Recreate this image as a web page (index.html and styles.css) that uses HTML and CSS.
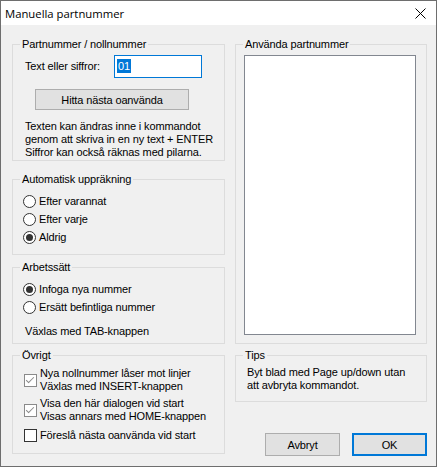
FILE: index.html
```html
<!DOCTYPE html>
<html lang="sv">
<head>
    <meta charset="UTF-8">
    <link rel="stylesheet" href="styles.css">
    <title>Manuella partnummer</title>
</head>
<body>
    <div class="window">
        <div class="titlebar">
            <span class="title">Manuella partnummer</span>
            <svg class="close" width="11" height="11" viewBox="0 0 11 11">
                <path d="M0.5 0.5 L10.5 10.5 M10.5 0.5 L0.5 10.5" stroke="#000" stroke-width="1" fill="none"/>
            </svg>
        </div>

        <div class="content">
            <div class="col-left">
                <div class="group g-part">
                    <div class="group-title">Partnummer / nollnummer</div>
                    <div class="text-row">
                        <span class="field-label">Text eller siffror:</span>
                        <div class="textbox"><span class="sel">01</span></div>
                    </div>
                    <button class="btn btn-find">Hitta nästa oanvända</button>
                    <p class="info">Texten kan ändras inne i kommandot<br>genom att skriva in en ny text + ENTER<br>Siffror kan också räknas med pilarna.</p>
                </div>

                <div class="group g-auto">
                    <div class="group-title">Automatisk uppräkning</div>
                    <div class="options">
                        <label class="radio"><span class="dot"></span>Efter varannat</label>
                        <label class="radio"><span class="dot"></span>Efter varje</label>
                        <label class="radio on"><span class="dot"></span>Aldrig</label>
                    </div>
                </div>

                <div class="group g-mode">
                    <div class="group-title">Arbetssätt</div>
                    <div class="options">
                        <label class="radio on"><span class="dot"></span>Infoga nya nummer</label>
                        <label class="radio"><span class="dot"></span>Ersätt befintliga nummer</label>
                    </div>
                    <p class="hint">Växlas med TAB-knappen</p>
                </div>

                <div class="group g-misc">
                    <div class="group-title">Övrigt</div>
                    <label class="check on first"><span class="box"></span><span>Nya nollnummer låser mot linjer<br>Växlas med INSERT-knappen</span></label>
                    <label class="check on second"><span class="box"></span><span>Visa den här dialogen vid start<br>Visas annars med HOME-knappen</span></label>
                    <label class="check third"><span class="box"></span><span>Föreslå nästa oanvända vid start</span></label>
                </div>
            </div>

            <div class="col-right">
                <div class="group g-used">
                    <div class="group-title">Använda partnummer</div>
                    <div class="listbox"></div>
                </div>

                <div class="group g-tips">
                    <div class="group-title">Tips</div>
                    <p class="tips">Byt blad med Page up/down utan<br>att avbryta kommandot.</p>
                </div>

                <div class="actions">
                    <button class="btn btn-dlg">Avbryt</button>
                    <button class="btn btn-dlg btn-default">OK</button>
                </div>
            </div>
        </div>
    </div>
</body>
</html>
```

FILE: styles.css
```css
        body {
            margin: 0;
            padding: 0;
            font-family: "Liberation Sans", Arial, sans-serif;
            font-size: 11px;
            line-height: 13px;
            letter-spacing: -0.13px;
            color: #000;
        }

        .window {
            width: 437px;
            height: 467px;
            box-sizing: border-box;
            border: 1px solid #6e6e6e;
            display: flex;
            flex-direction: column;
            overflow: hidden;
        }

        .titlebar {
            height: 24px;
            background: #fff;
            display: flex;
            align-items: center;
            justify-content: space-between;
            padding: 0 10px 0 4px;
        }

        .title {
            font-family: "Open Sans", "Noto Sans", sans-serif;
            font-size: 11.3px;
            letter-spacing: 0;
            margin-top: 1px;
        }

        .close {
            display: block;
            margin-top: 1px;
        }

        .content {
            flex: 1;
            background: #f0f0f0;
            display: flex;
            gap: 10px;
            padding: 19px 9px 0 11px;
        }

        .col-left {
            width: 213px;
        }

        .col-right {
            width: 192px;
        }

        .group {
            box-sizing: border-box;
            border: 1px solid #dcdcdc;
        }

        .group-title {
            width: max-content;
            margin: -7px 0 0 7px;
            padding: 0 2px;
            background: #f0f0f0;
        }

        p {
            margin: 0;
        }

        /* left column */
        .g-part { height: 117px; }
        .g-auto { height: 76px; margin-top: 18px; }
        .g-mode { height: 77px; margin-top: 12px; }
        .g-misc { height: 99px; margin-top: 11px; }

        .text-row {
            display: flex;
            align-items: center;
            margin-top: 4px;
            padding-left: 12px;
        }

        .field-label {
            width: 89px;
        }

        .textbox {
            width: 88px;
            height: 23px;
            box-sizing: border-box;
            border: 1px solid #0078d7;
            background: #fff;
            padding: 3px 0 0 2px;
        }

        .sel {
            background: #0078d7;
            color: #fff;
            display: inline-block;
            line-height: 14px;
            padding: 0 1px;
        }

        .btn {
            font-family: inherit;
            font-size: 11px;
            letter-spacing: inherit;
            color: #000;
            background: #e1e1e1;
            border: 1px solid #adadad;
            padding: 0;
            box-sizing: border-box;
        }

        .btn-find {
            display: block;
            width: 154px;
            height: 21px;
            margin: 11px 0 0 22px;
        }

        .info {
            margin: 10px 0 0 12px;
        }

        .options {
            margin-top: 6px;
            padding-left: 10px;
        }

        .radio {
            display: flex;
            align-items: center;
            height: 18px;
        }

        .dot {
            width: 13px;
            height: 13px;
            box-sizing: border-box;
            border: 1px solid #333;
            border-radius: 50%;
            background: #fff;
            margin-right: 3px;
            display: flex;
            align-items: center;
            justify-content: center;
        }

        .radio.on .dot::after {
            content: "";
            width: 7px;
            height: 7px;
            border-radius: 50%;
            background: #333;
        }

        .hint {
            margin: 9px 0 0 12px;
        }

        .check {
            display: flex;
            align-items: center;
            padding-left: 11px;
        }

        .check.first { margin-top: 5px; }
        .check.second { margin-top: 4px; }
        .check.third { margin-top: 6px; }

        .box {
            width: 13px;
            height: 13px;
            box-sizing: border-box;
            border: 1px solid #333;
            background: #fff;
            margin-right: 3px;
            flex: none;
            position: relative;
        }

        .check.on .box {
            border-color: #8a8a8a;
        }

        .check.on .box::after {
            content: "";
            position: absolute;
            left: 3px;
            top: 0px;
            width: 3px;
            height: 7px;
            border: solid #8a8a8a;
            border-width: 0 1px 1px 0;
            transform: rotate(45deg);
        }

        /* right column */
        .g-used { height: 300px; }
        .g-tips { height: 47px; margin-top: 11px; }

        .listbox {
            width: 172px;
            height: 280px;
            box-sizing: border-box;
            margin: 4px 0 0 8px;
            background: #fff;
            border: 1px solid #828790;
        }

        .tips {
            margin: 4px 0 0 11px;
        }

        .actions {
            display: flex;
            justify-content: flex-end;
            gap: 12px;
            margin-top: 31px;
        }

        .btn-dlg {
            width: 75px;
            height: 23px;
        }

        .btn-default {
            border: 2px solid #0078d7;
        }
```
